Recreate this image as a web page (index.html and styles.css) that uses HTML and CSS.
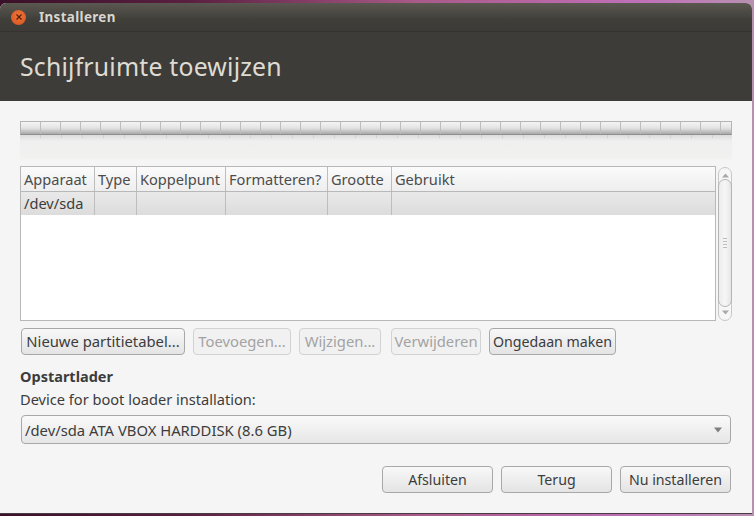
FILE: index.html
```html
<!DOCTYPE html>
<html lang="nl">
<head>
<meta charset="utf-8">
<title>Installeren</title>
<link rel="stylesheet" href="styles.css">
</head>
<body>
<div class="window">
  <div class="titlebar">
    <span class="close"><svg width="8" height="8" viewBox="0 0 8 8"><path d="M1.5 1.5l5 5M6.5 1.5l-5 5" stroke="#5a1d08" stroke-width="1.3" fill="none"/></svg></span>
    <span class="wintitle">Installeren</span>
  </div>
  <div class="banner"><h1>Schijfruimte toewijzen</h1></div>
  <main class="content">
    <div class="partbar"></div>
    <div class="reflect"></div>
    <div class="tablewrap">
      <div class="table">
        <div class="row head">
          <span>Apparaat</span><span>Type</span><span>Koppelpunt</span><span>Formatteren?</span><span>Grootte</span><span>Gebruikt</span>
        </div>
        <div class="row sel">
          <span>/dev/sda</span><span></span><span></span><span></span><span></span><span></span>
        </div>
      </div>
      <div class="scroll">
        <svg class="arrow" width="7" height="5" viewBox="0 0 7 5"><path d="M3.5 0.5L7 4.5H0z" fill="#a9a9a9"/></svg>
        <div class="thumb"><i></i><i></i><i></i><i></i></div>
        <svg class="arrow" width="7" height="5" viewBox="0 0 7 5"><path d="M0 0.5H7L3.5 4.5z" fill="#a9a9a9"/></svg>
      </div>
    </div>
    <div class="actions">
      <button class="btn w164">Nieuwe partitietabel...</button>
      <button class="btn off w98">Toevoegen...</button>
      <button class="btn off w82">Wijzigen...</button>
      <button class="btn off w90">Verwijderen</button>
      <button class="btn w127">Ongedaan maken</button>
    </div>
    <h2>Opstartlader</h2>
    <label class="devlabel">Device for boot loader installation:</label>
    <div class="combo">
      <span>/dev/sda ATA VBOX HARDDISK (8.6 GB)</span>
      <svg width="8" height="6" viewBox="0 0 8 6"><path d="M0 0.5H8L4 5.5z" fill="#7f7f7f"/></svg>
    </div>
    <div class="footer">
      <button class="btn w111">Afsluiten</button>
      <button class="btn w111">Terug</button>
      <button class="btn w111">Nu installeren</button>
    </div>
  </main>
</div>
</body>
</html>
```

FILE: styles.css
```css
* { box-sizing: border-box; }
html, body { margin: 0; height: 100%; }
body {
  width: 754px;
  height: 516px;
  overflow: hidden;
  padding: 3px 2px 2px 0;
  background: linear-gradient(90deg, #3a1028 0%, #5a1f40 25%, #a85a88 55%, #c070b8 85%, #b890b0 100%);
  font-family: "Noto Sans", sans-serif;
  color: #3c3c3c;
}
.window {
  height: 511px;
  display: flex;
  flex-direction: column;
  background: #f5f5f5;
  border-radius: 6px 6px 0 0;
  overflow: hidden;
  border-bottom: 1px solid #4a3a44;
}
.titlebar {
  height: 29px;
  flex: none;
  display: flex;
  align-items: center;
  padding-left: 11px;
  background: linear-gradient(#5b5851, #403e39 60%, #3d3b37);
  border-bottom: 1px solid #35332f;
}
.close {
  width: 15px;
  height: 15px;
  border-radius: 50%;
  background: radial-gradient(circle at 50% 40%, #f0773c, #d4501c);
  display: flex;
  align-items: center;
  justify-content: center;
}
.wintitle {
  margin-left: 13px;
  font-size: 13.4px;
  font-weight: 700;
  color: #d8d6d0;
  letter-spacing: 0.35px;
}
.banner {
  height: 69px;
  flex: none;
  background: #3e3c38;
  padding: 18px 0 0 20px;
}
h1 {
  margin: 0;
  font-size: 24.8px;
  line-height: 32px;
  font-weight: 400;
  color: #dedbd3;
  letter-spacing: 0.2px;
}
.content {
  flex: 1;
  padding: 20px 20px 0 20px;
  display: flex;
  flex-direction: column;
}
.partbar {
  height: 14px;
  border: 1px solid #b4b4b4;
  border-bottom-color: #8f8f8f;
  background:
    repeating-linear-gradient(90deg, transparent 0, transparent 19px, #bdbdbd 19px, #bdbdbd 20px),
    linear-gradient(#f4f4f4, #e4e4e4 50%, #a8a8a8);
}
.reflect {
  height: 25px;
  background:
    repeating-linear-gradient(90deg, transparent 0, transparent 20px, #d0d0d0 20px, #d0d0d0 21px) 0 0 / 100% 3px no-repeat,
    linear-gradient(#dcdcdc, #efefef 24%, #f1f1f0 90%, #f4f4f4);
}
.tablewrap {
  height: 155px;
  margin-top: 6px;
  display: flex;
  gap: 2px;
}
.table {
  width: 697px;
  background: #fff;
  border: 1px solid #b8b8b8;
}
.row {
  display: grid;
  grid-template-columns: 74px 42px 89px 102px 64px 1fr;
  font-size: 14.6px;
}
.row span {
  padding-left: 3px;
  border-right: 1px solid #bdbdbd;
  white-space: nowrap;
  overflow: hidden;
}
.row span:last-child { border-right: 0; }
.head {
  height: 25px;
  line-height: 25px;
  background: linear-gradient(#fbfbfb, #eeeeee);
  border-bottom: 1px solid #b8b8b8;
  color: #4c4c4c;
}
.sel {
  height: 23px;
  line-height: 23px;
  background: linear-gradient(#e9e9e9, #dcdcdc);
}
.scroll {
  width: 14px;
  border: 1px solid #c8c8c8;
  border-radius: 7px;
  background: #f6f6f6;
  display: flex;
  flex-direction: column;
  align-items: center;
  justify-content: space-between;
  padding: 5px 0;
  margin: 1px 0 0;
  height: 154px;
  position: relative;
}
.arrow { flex: none; }
.thumb {
  position: absolute;
  left: -1px;
  top: 11px;
  width: 14px;
  height: 128px;
  border: 1px solid #b5b5b5;
  border-radius: 7px;
  background: linear-gradient(90deg, #ececec, #f6f6f6 50%, #e6e6e6);
  display: flex;
  flex-direction: column;
  align-items: center;
  justify-content: center;
  gap: 2px;
}
.thumb i {
  width: 4px;
  height: 1px;
  background: #bcbcbc;
}
.actions {
  display: flex;
  margin-top: 7px;
  padding-left: 1px;
  gap: 8px;
}
.actions .btn:nth-child(4) { margin-left: 2px; }
.btn {
  height: 27px;
  padding: 0;
  font: 14.8px/25px "Noto Sans", sans-serif;
  color: #3c3c3c;
  border: 1px solid #a8a8a8;
  border-radius: 4px;
  background: linear-gradient(#f8f8f8, #e4e4e4);
  white-space: nowrap;
  letter-spacing: 0;
}
.btn.off {
  color: #a3a3a3;
  border-color: #d2d2d2;
  background: #f1f1f1;
}
.w164 { width: 164px; }
.w98 { width: 98px; }
.w82 { width: 82px; }
.w90 { width: 90px; }
.w127 { width: 127px; font-size: 14.2px; }
.w111 { width: 111px; font-size: 14.2px; }
h2 {
  margin: 12px 0 0;
  font-size: 14.5px;
  line-height: 18px;
  font-weight: 700;
  color: #3c3c3c;
}
.devlabel {
  margin-top: 5px;
  font-size: 14.6px;
  line-height: 18px;
}
.combo {
  height: 29px;
  margin: 7px 0 0 1px;
  width: 710px;
  border: 1px solid #a8a8a8;
  border-radius: 4px;
  background: linear-gradient(#fafafa, #e6e6e6);
  display: flex;
  align-items: center;
  justify-content: space-between;
  padding: 0 8px 0 3px;
  font-size: 14.8px;
}
.footer {
  display: flex;
  justify-content: flex-end;
  gap: 8px;
  margin-top: 22px;
  width: 711px;
}
```
